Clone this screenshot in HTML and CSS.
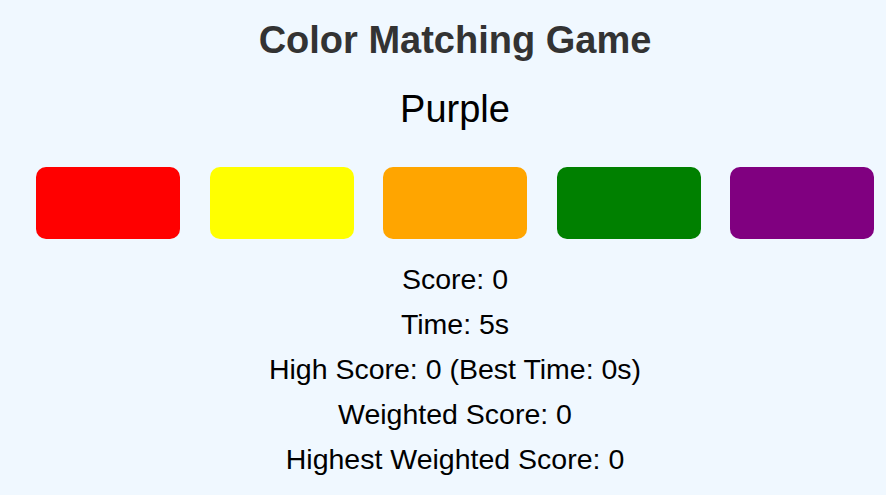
FILE: index.html
```html
<!DOCTYPE html>
<html lang="en">
<head>
  <meta charset="UTF-8" />
  <meta name="viewport" content="width=device-width, initial-scale=1" />
  <title>Color Matching Game</title>
  <link rel="stylesheet" href="styles.css">
</head>
<body>

  <h1 class="title">Color Matching Game</h1>
  <p class="target" id="target">Purple</p>

  <div class="swatches">
    <div class="swatch red"></div>
    <div class="swatch yellow"></div>
    <div class="swatch orange"></div>
    <div class="swatch green"></div>
    <div class="swatch purple"></div>
  </div>

  <div class="stats">
    <p id="score">Score: 0</p>
    <p id="time">Time: 5s</p>
    <p id="highScore">High Score: 0 (Best Time: 0s)</p>
    <p id="weighted">Weighted Score: 0</p>
    <p id="highWeighted">Highest Weighted Score: 0</p>
  </div>

</body>
</html>
```

FILE: styles.css
```css
body {
  margin: 0;
  padding: 0 0 0 24px;
  background-color: #f0f8ff;
  font-family: "Liberation Sans", Arial, sans-serif;
  color: black;
  text-align: center;
  overflow: hidden;
}
.title {
  font-size: 38px;
  line-height: 44px;
  font-weight: bold;
  color: #333;
  margin: 18px 0 0 0;
}
.target {
  font-size: 38px;
  line-height: 44px;
  margin: 25px 0 0 0;
}
.swatches {
  display: flex;
  justify-content: center;
  gap: 29.5px;
  margin-top: 35.5px;
}
.swatch {
  width: 144px;
  height: 72px;
  border-radius: 10px;
  cursor: pointer;
}
.red { background: red; }
.yellow { background: yellow; }
.orange { background: orange; }
.green { background: green; }
.purple { background: purple; }
.stats {
  margin-top: 18.5px;
}
.stats p {
  font-size: 28.5px;
  line-height: 45px;
  margin: 0;
}
```
